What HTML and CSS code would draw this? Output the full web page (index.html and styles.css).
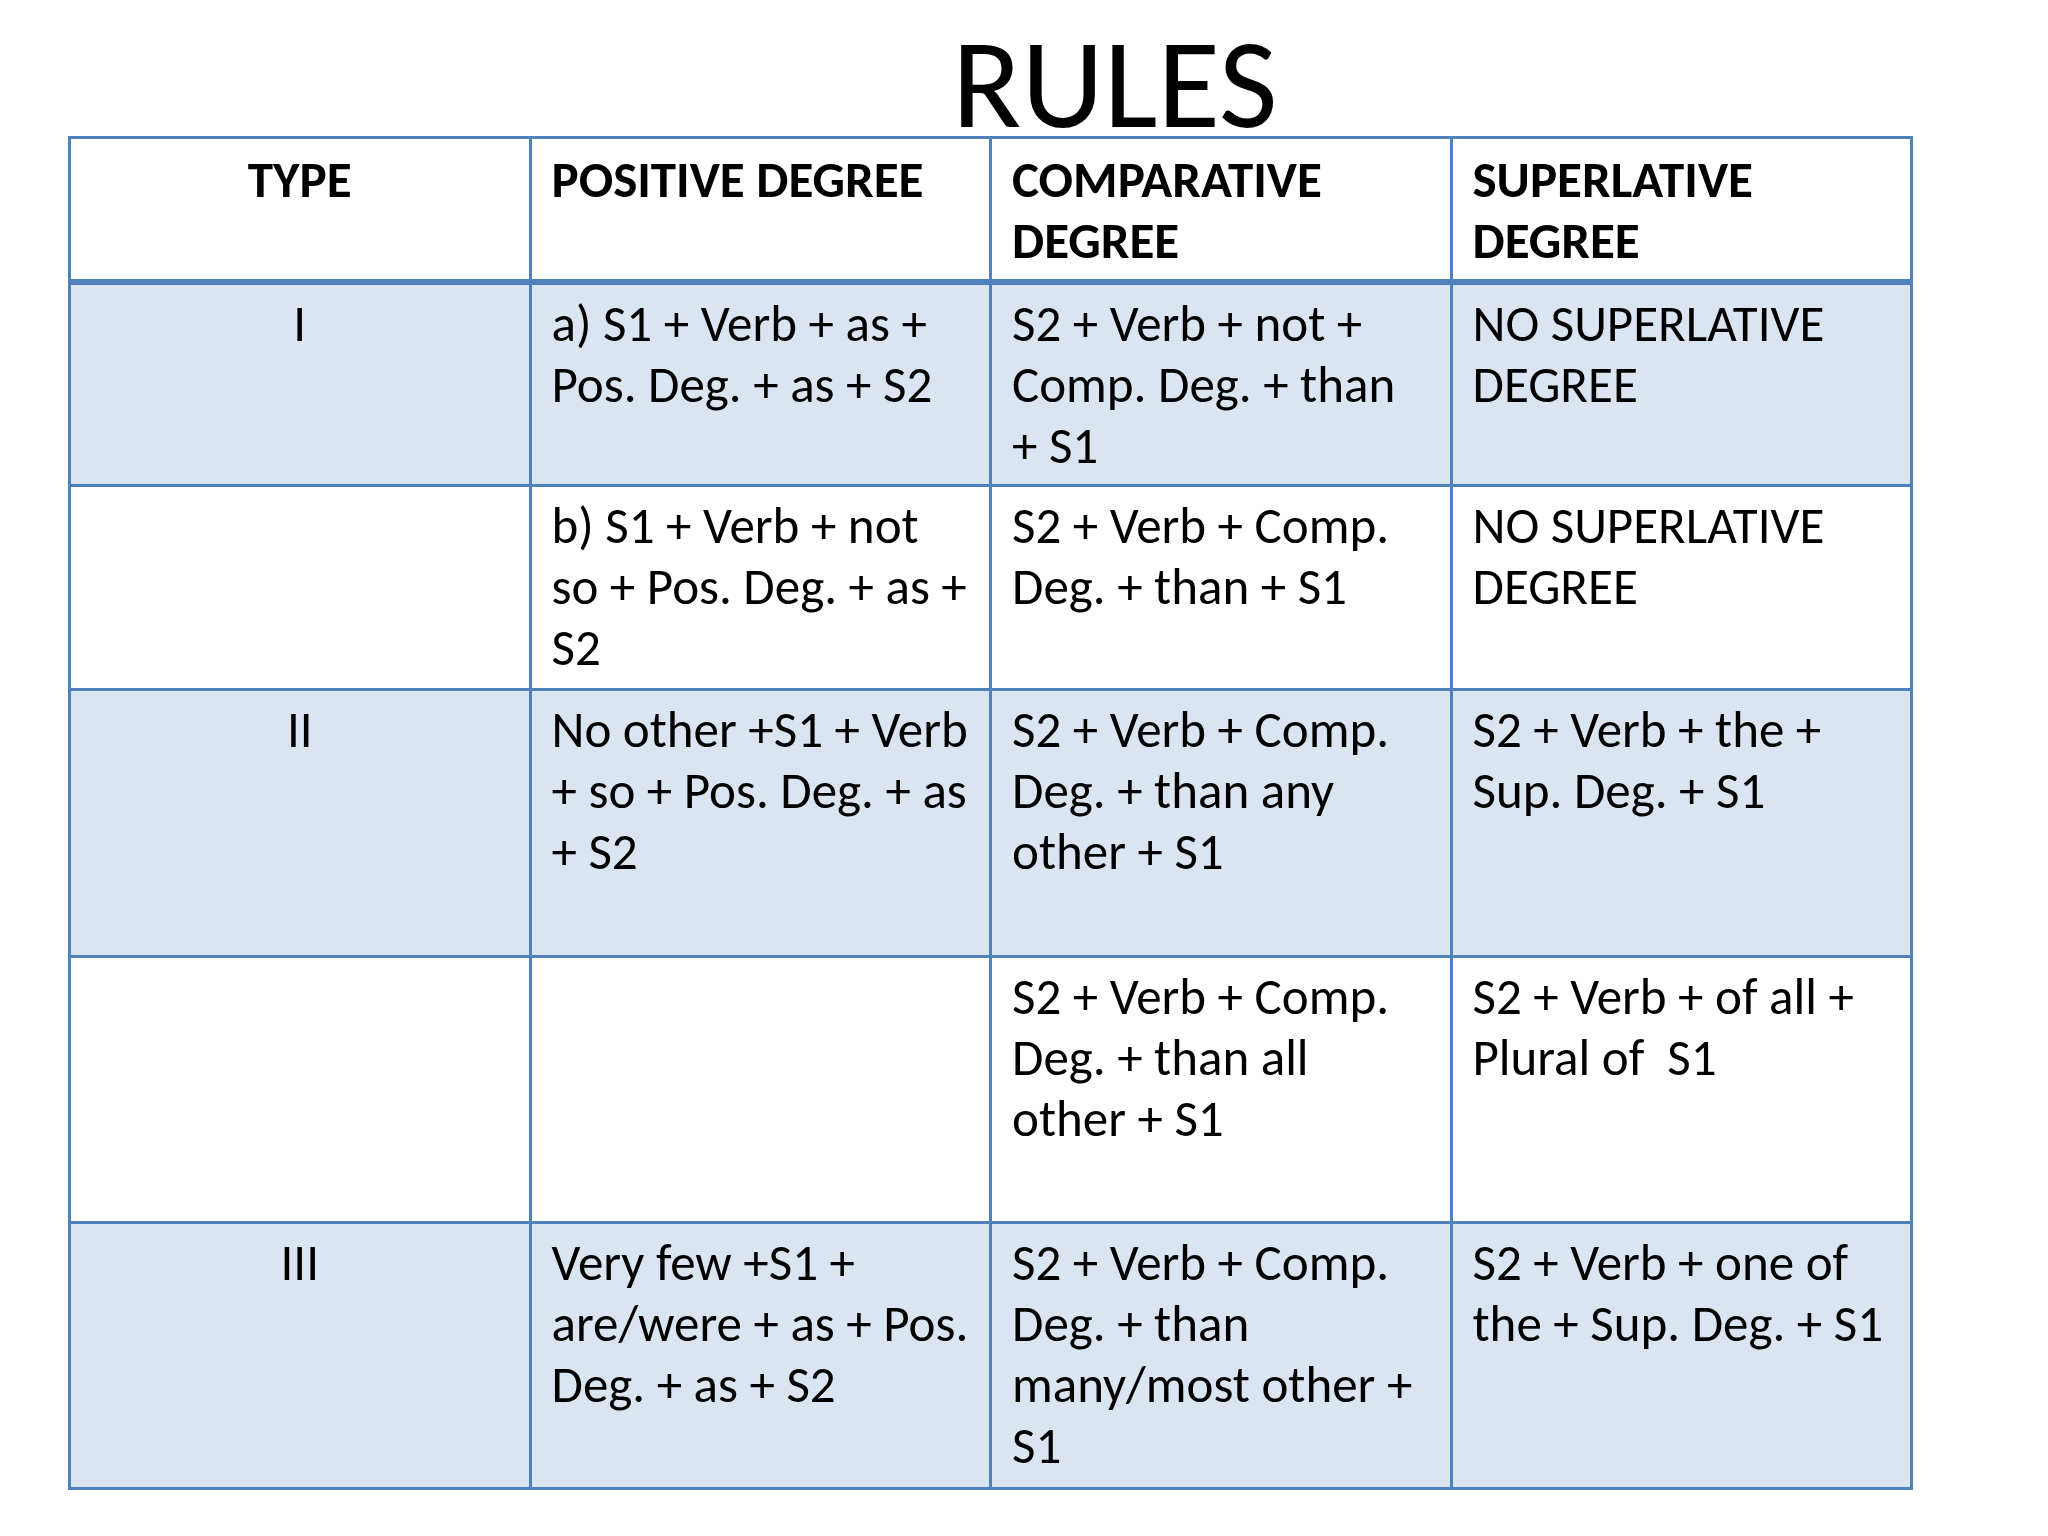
FILE: index.html
```html
<!DOCTYPE html>
<html>
<head>
<meta charset="utf-8">
<link rel="stylesheet" href="styles.css">
</head>
<body>
<div class="slide">
  <h1 class="title">RULES</h1>
  <table class="rules">
    <thead>
      <tr class="head">
        <th class="type">TYPE</th>
        <th>POSITIVE DEGREE</th>
        <th>COMPARATIVE<br>DEGREE</th>
        <th>SUPERLATIVE<br>DEGREE</th>
      </tr>
    </thead>
    <tbody>
      <tr class="band r1">
        <td class="type">I</td>
        <td>a) S1 + Verb + as +<br>Pos. Deg. + as + S2</td>
        <td>S2 + Verb + not +<br>Comp. Deg. + than<br>+ S1</td>
        <td>NO SUPERLATIVE<br>DEGREE</td>
      </tr>
      <tr class="plain r2">
        <td class="type"></td>
        <td>b) S1 + Verb + not<br>so + Pos. Deg. + as +<br>S2</td>
        <td>S2 + Verb + Comp.<br>Deg. + than + S1</td>
        <td>NO SUPERLATIVE<br>DEGREE</td>
      </tr>
      <tr class="band r3">
        <td class="type">II</td>
        <td>No other +S1 + Verb<br>+ so + Pos. Deg. + as<br>+ S2</td>
        <td>S2 + Verb + Comp.<br>Deg. + than any<br>other + S1</td>
        <td>S2 + Verb + the +<br>Sup. Deg. + S1</td>
      </tr>
      <tr class="plain r4">
        <td class="type"></td>
        <td></td>
        <td>S2 + Verb + Comp.<br>Deg. + than all<br>other + S1</td>
        <td>S2 + Verb + of all +<br>Plural of &nbsp;S1</td>
      </tr>
      <tr class="band r5">
        <td class="type">III</td>
        <td>Very few +S1 +<br>are/were + as + Pos.<br>Deg. + as + S2</td>
        <td>S2 + Verb + Comp.<br>Deg. + than<br>many/most other +<br>S1</td>
        <td>S2 + Verb + one of<br>the + Sup. Deg. + S1</td>
      </tr>
    </tbody>
  </table>
</div>
</body>
</html>
```
FILE: styles.css
```css
html, body {
  margin: 0;
  padding: 0;
  background: #ffffff;
}

.slide {
  width: 2048px;
  height: 1536px;
  padding: 0 0 0 68px;
  box-sizing: border-box;
  font-family: "Carlito", "Lato", "Open Sans", sans-serif;
  color: #000000;
}

.title {
  margin: 0;
  padding: 18px 0 0 884px;
  height: 136px;
  font-weight: 400;
  font-size: 128px;
  line-height: 130px;
  box-sizing: border-box;
  white-space: nowrap;
  overflow: visible;
}

.rules {
  border-collapse: collapse;
  table-layout: fixed;
  width: 1845px;
  border: 3px solid #4f81bd;
}

.rules th,
.rules td {
  width: 25%;
  border: 3px solid #4f81bd;
  vertical-align: top;
  text-align: left;
  padding: 10px 10px 0 20px;
  font-size: 51px;
  line-height: 61px;
  white-space: nowrap;
  box-sizing: border-box;
}

.rules th {
  font-weight: 700;
  border-bottom-width: 6px;
}

.rules .type {
  text-align: center;
  padding-left: 10px;
}

.head { height: 144px; background: #ffffff; }
.band { background: #dbe5f1; }
.plain { background: #ffffff; }

.r1 { height: 204px; }
.r2 { height: 204px; }
.r3 { height: 267px; }
.r4 { height: 266px; }
.r5 { height: 266px; }

.rules tbody td { padding-top: 8px; }
```
